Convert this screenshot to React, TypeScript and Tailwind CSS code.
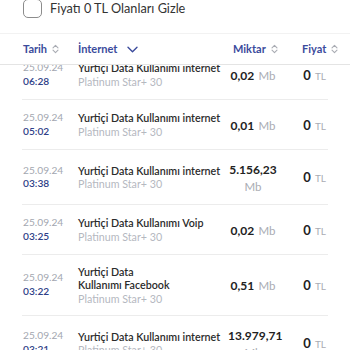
import React from 'react';

type Row = {
  date: string;
  time: string;
  title: string;
  plan: string;
  amount: string;
  unit: string;
  wrapUnit?: boolean;
};

const rows: Row[] = [
  { date: '25.09.24', time: '06:28', title: 'Yurtiçi Data Kullanımı internet', plan: 'Platinum Star+ 30', amount: '0,02', unit: 'Mb' },
  { date: '25.09.24', time: '05:02', title: 'Yurtiçi Data Kullanımı internet', plan: 'Platinum Star+ 30', amount: '0,01', unit: 'Mb' },
  { date: '25.09.24', time: '03:38', title: 'Yurtiçi Data Kullanımı internet', plan: 'Platinum Star+ 30', amount: '5.156,23', unit: 'Mb', wrapUnit: true },
  { date: '25.09.24', time: '03:25', title: 'Yurtiçi Data Kullanımı Voip', plan: 'Platinum Star+ 30', amount: '0,02', unit: 'Mb' },
  { date: '25.09.24', time: '03:22', title: 'Yurtiçi Data\nKullanımı Facebook', plan: 'Platinum Star+ 30', amount: '0,51', unit: 'Mb' },
  { date: '25.09.24', time: '03:21', title: 'Yurtiçi Data Kullanımı internet', plan: 'Platinum Star+ 30', amount: '13.979,71', unit: 'Mb', wrapUnit: true },
];

function SortIcon() {
  return (
    <svg width="7" height="10" viewBox="0 0 7 10" fill="none" stroke="#a9acb3" strokeWidth="1.1" strokeLinecap="round" strokeLinejoin="round">
      <path d="M1 3.8 L3.5 1.3 L6 3.8" />
      <path d="M1 6.2 L3.5 8.7 L6 6.2" />
    </svg>
  );
}

function ChevronDown() {
  return (
    <svg width="11" height="7" viewBox="0 0 11 7" fill="none" stroke="#3b4b9c" strokeWidth="1.4" strokeLinecap="round" strokeLinejoin="round">
      <path d="M1 1.2 L5.5 5.7 L10 1.2" />
    </svg>
  );
}

function UsageRow({ row, first }: { row: Row; first?: boolean }) {
  return (
    <div
      className={`grid grid-cols-[55px_150px_50px_1fr] items-center min-h-[50px] py-[10px] pl-[1px] border-b border-[#ececec] ${first ? '-mt-[15px]' : ''}`}
    >
      <div className="flex flex-col text-[10.2px] leading-[13.5px]">
        <span className="text-[#a3a7b0]">{row.date}</span>
        <span className="text-[#2f3f88] font-semibold">{row.time}</span>
      </div>
      <div className="flex flex-col pr-[3px] text-[10.7px] leading-[13.3px]">
        <span className="text-[#2b2b2b] font-semibold whitespace-pre-line">{row.title}</span>
        <span className="text-[#b5b8bf]">{row.plan}</span>
      </div>
      <div className="text-center leading-[15px] whitespace-nowrap">
        <span className="text-[12px] font-bold text-[#222]">{row.amount}</span>
        {row.wrapUnit ? <br /> : ' '}
        <span className="text-[11.5px] text-[#a9acb3]">{row.unit}</span>
      </div>
      <div className="text-right pr-[2px] leading-[15px]">
        <span className="text-[13px] font-bold text-[#222]">0</span>{' '}
        <span className="text-[10px] text-[#a9acb3]">TL</span>
      </div>
    </div>
  );
}

export default function App() {
  return (
    <div className="w-[350px] h-[350px] overflow-hidden bg-white font-['Lato',sans-serif]">
      <div className="h-[35px] px-[23px] border-b border-[#f2f2f2]">
        <div className="flex items-center gap-[8px] -mt-[1px]">
          <div className="w-[19px] h-[19px] rounded-[5px] border-[1.5px] border-[#8c8c8c]" />
          <span className="text-[12.7px] text-[#333]">Fiyatı 0 TL Olanları Gizle</span>
        </div>
      </div>

      <div className="relative z-10 h-[31px] bg-white border-b border-[#e4e4e4] grid grid-cols-[55px_155px_69px_1fr] items-center pl-[23px] text-[11px] font-bold text-[#3b4b9c]">
        <div className="flex items-center gap-[5px]">
          Tarih <SortIcon />
        </div>
        <div className="flex items-center gap-[10px]">
          İnternet <ChevronDown />
        </div>
        <div className="flex items-center gap-[5px]">
          Miktar <SortIcon />
        </div>
        <div className="flex items-center gap-[5px]">
          Fiyat <SortIcon />
        </div>
      </div>

      <div className="relative z-0 px-[22px]">
        {rows.map((r, i) => (
          <UsageRow key={i} row={r} first={i === 0} />
        ))}
      </div>
    </div>
  );
}
